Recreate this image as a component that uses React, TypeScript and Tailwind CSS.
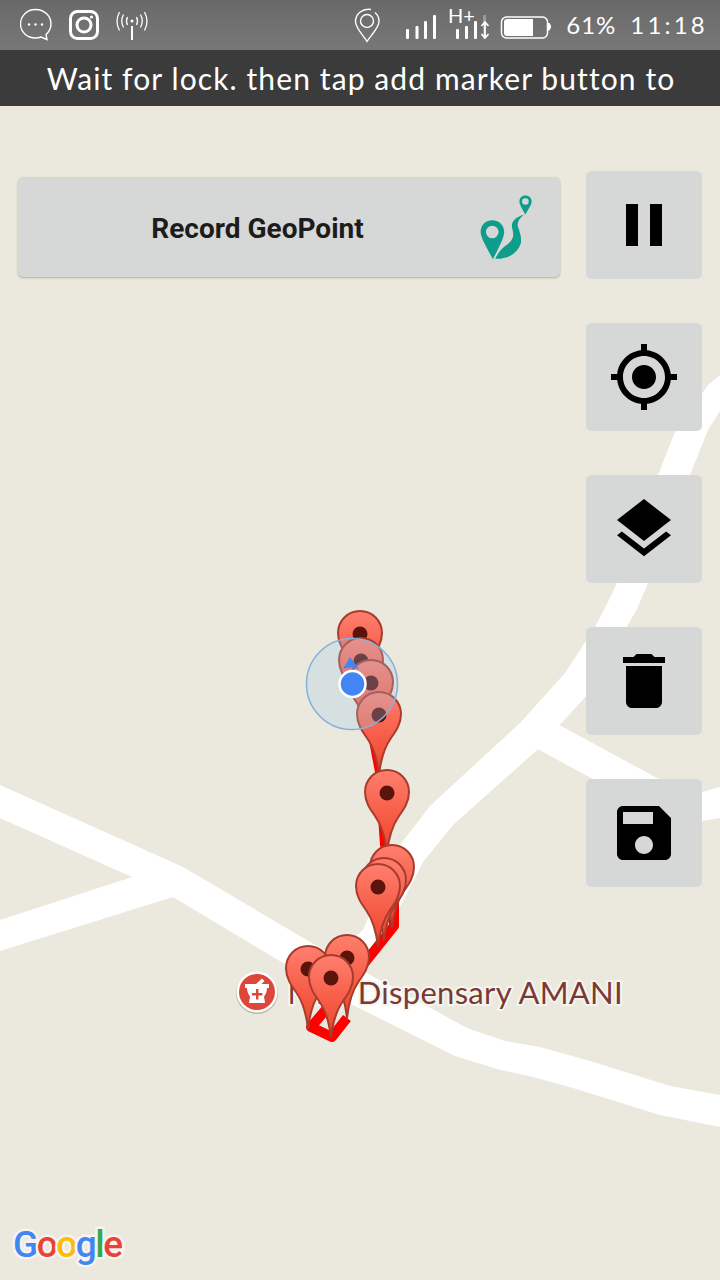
import React from "react";

const ROAD_A = "0,785 183,867 310,942 467,1028 505,1041 540,1047 590,1061 670,1086 720,1095 720,1127 660,1115 573,1088 533,1077 497,1069 455,1056 353,1005 173,897 0,951 0,920 132,877 0,818";
const ROAD_B = "720,375 708,385 675,432 658,475 617,583 607,604 595,627 565,673 520,723 430,806 400,845 363,930 335,955 355,1000 370,960 400,907 423,862 453,825 537,750 558,727 587,695 637,609 648,583 690,475 708,430 720,411";
const ROAD_C = "550,720 657,778 702,792 720,787 720,818 702,821 660,810 593,779 530,745";

const PINS: [number, number][] = [
  [360, 634], [361, 661], [371, 683], [379, 715], [387, 793],
  [392, 868], [384, 881], [378, 887], [347, 958], [308, 969], [331, 978],
];

function Pin({ x, y }: { x: number; y: number }) {
  return (
    <g transform={`translate(${x} ${y})`}>
      <path
        d="M0,-23 C-12.5,-23 -22,-13 -22,-1 C-22,9 -17,16 -12,23 C-7,30 -2,42 0,60 C2,42 7,30 12,23 C17,16 22,9 22,-1 C22,-13 12.5,-23 0,-23Z"
        fill="url(#pinFill)"
        stroke="#a83c2c"
        strokeWidth="2"
      />
      <circle r="7.5" fill="#5a140c" />
    </g>
  );
}

function MapBtn({ d }: { d: string }) {
  return (
    <button className="flex h-[108px] w-[116px] items-center justify-center rounded-[5px] bg-[#d6d8d8]">
      <svg width="72" height="72" viewBox="0 0 24 24" fill="#000">
        <path d={d} />
      </svg>
    </button>
  );
}

const ICONS = [
  "M6 19h4V5H6v14zm8-14v14h4V5h-4z",
  "M12 8c-2.21 0-4 1.79-4 4s1.79 4 4 4 4-1.79 4-4-1.79-4-4-4zm8.94 3c-.46-4.17-3.77-7.48-7.94-7.94V1h-2v2.06C6.83 3.52 3.52 6.83 3.06 11H1v2h2.06c.46 4.17 3.77 7.48 7.94 7.94V23h2v-2.06c4.17-.46 7.48-3.77 7.94-7.94H23v-2h-2.06zM12 19c-3.87 0-7-3.13-7-7s3.13-7 7-7 7 3.13 7 7-3.13 7-7 7z",
  "M11.99 18.54l-7.37-5.73L3 14.07l9 7 9-7-1.63-1.27-7.38 5.74zM12 16l7.36-5.73L21 9l-9-7-9 7 1.63 1.27L12 16z",
  "M6 19c0 1.1.9 2 2 2h8c1.1 0 2-.9 2-2V7H6v12zM19 4h-3.5l-1-1h-5l-1 1H5v2h14V4z",
  "M17 3H5c-1.11 0-2 .9-2 2v14c0 1.1.89 2 2 2h14c1.1 0 2-.9 2-2V7l-4-4zm-5 16c-1.66 0-3-1.34-3-3s1.34-3 3-3 3 1.34 3 3-1.34 3-3 3zm3-10H5V5h10v4z",
];

function Bars({ xs, dimLast }: { xs: number[]; dimLast?: boolean }) {
  const tops = [29, 26, 21, 15];
  return (
    <>
      {xs.map((x, i) => (
        <rect
          key={x}
          x={x}
          y={tops[i]}
          width="3"
          height={39 - tops[i]}
          rx="1"
          fill={dimLast && i === 3 ? "#9a9a9a" : "#fff"}
        />
      ))}
    </>
  );
}

function StatusBar() {
  return (
    <div className="flex h-[50px] items-center justify-between bg-linear-to-b from-[#696969] to-[#787878] pl-[20px] pr-[12px]">
      <div className="flex items-center">
        <svg width="32" height="50" viewBox="20 0 32 50" fill="none" stroke="#fff">
          <path d="M46 34.500 C50 31 51 27.500 51 24 C51 15.500 44 9.500 35.500 9.500 C27 9.500 20.500 16 20.500 24 C20.500 32 27 38 35.500 38 C38 38 39.500 37.600 41 37 L47 39.500 Z" strokeWidth="1.400" />
          <circle cx="29" cy="24.500" r="1.200" fill="#fff" stroke="none" />
          <circle cx="35.500" cy="24.500" r="1.200" fill="#fff" stroke="none" />
          <circle cx="42" cy="24.500" r="1.200" fill="#fff" stroke="none" />
        </svg>
        <svg className="ml-[17px]" width="30" height="50" viewBox="69 0 30 50" fill="none" stroke="#fff" strokeWidth="3">
          <rect x="70.500" y="11.500" width="27" height="27" rx="7" />
          <circle cx="84" cy="25" r="7" />
          <circle cx="91.500" cy="17" r="1.600" fill="#fff" stroke="none" />
        </svg>
        <svg className="ml-[17px]" width="33" height="50" viewBox="116 0 33 50" fill="none" stroke="#fff" strokeWidth="1.300">
          <circle cx="132" cy="21" r="1.500" fill="#fff" stroke="none" />
          <path d="M132 26V40" strokeWidth="2" />
          <path d="M127.500 17 Q125.500 21 127.500 25 M136.500 17 Q138.500 21 136.500 25" />
          <path d="M123.500 14.500 Q120 21 123.500 27.500 M140.500 14.500 Q144 21 140.500 27.500" />
          <path d="M119.500 12 Q114.500 21 119.500 30.500 M144.500 12 Q149.500 21 144.500 30.500" />
        </svg>
      </div>
      <div className="flex items-center">
        <svg width="27" height="50" viewBox="355 0 27 50" fill="none" stroke="#fff" strokeWidth="1.400">
          <path d="M372 9.500 C364 8 356.500 13.500 356.500 21.500 C356.500 28 364 35 368 41.500 C372 35 380 28 380 21.500 C380 18 378.500 14.500 376 12.500" />
          <circle cx="368" cy="21" r="6.500" />
        </svg>
        <svg className="ml-[25px]" width="30" height="50" viewBox="407 0 30 50">
          <Bars xs={[407, 416.500, 425, 434]} />
        </svg>
        <svg className="ml-[13px]" width="41" height="50" viewBox="450 0 41 50">
          <text x="449" y="23" fill="#fff" fontSize="20" fontFamily="Lato, sans-serif" fontWeight="400">H+</text>
          <Bars xs={[457, 466, 475, 484]} dimLast />
          <path d="M486 22v16M482.500 26l3.500-4 3.500 4M482.500 34l3.500 4 3.500-4" fill="none" stroke="#fff" strokeWidth="1.800" />
        </svg>
        <svg className="ml-[10px]" width="52" height="50" viewBox="501 0 52 50" fill="none">
          <rect x="502.500" y="17" width="46" height="21" rx="5" stroke="#fff" strokeWidth="1.500" />
          <path d="M505 22a3 3 0 0 1 3-3h26v17h-26a3 3 0 0 1-3-3z" fill="#fff" />
          <path d="M549 23h1.500l1.500 2.500v2l-1.500 3H549z" fill="#fff" />
        </svg>
        <span className="ml-[14px] font-['Lato',sans-serif] text-[24px] leading-none tracking-[1px] text-white">
          61%
        </span>
        <span className="ml-[14px] font-['Lato',sans-serif] text-[24px] leading-none tracking-[3.200px] text-white">
          11:18
        </span>
      </div>
    </div>
  );
}

function RecordButton() {
  return (
    <button className="flex h-[100px] w-[542px] items-center rounded-[5px] bg-[#d6d8d8] shadow-[0_1px_2px_rgba(120,110,90,0.5)]">
      <span className="flex-1 pl-[20px] pt-[3px] text-center font-['Roboto',sans-serif] text-[28px] font-bold text-[#1c1c1c]">
        Record GeoPoint
      </span>
      <svg className="mr-[25px]" width="58" height="70" viewBox="110 80 175 210" fill="#0d9d8a">
        <path fillRule="evenodd" d="M156 165 C134 165 121 182 121 200 C121 215 135 240 158 282 C180 240 192 215 192 200 C192 182 178 165 156 165Z M156 181 A19 19 0 1 0 156 219 A19 19 0 1 0 156 181Z" />
        <path fillRule="evenodd" d="M256 90 C245 90 238 98 238 108 C238 118 247 130 256 148 C265 130 275 118 275 108 C275 98 267 90 256 90Z M256 98 A10 10 0 1 0 256 118 A10 10 0 1 0 256 98Z" />
        <path d="M252 148 C225 155 212 170 216 188 C220 205 224 218 205 235 C195 243 180 250 165 281 C205 282 232 265 242 235 C246 215 238 198 233 183 C231 170 238 158 252 148Z" />
      </svg>
    </button>
  );
}

export default function App() {
  return (
    <div className="flex h-[1280px] w-[720px] flex-col overflow-hidden bg-[#ebe9dd]">
      <StatusBar />
      <div className="flex h-[56px] items-center justify-center bg-[#3b3b3b] pl-[2px] font-['Lato',sans-serif] text-[30px] tracking-[1.100px] text-white">
        Wait for lock. then tap add marker button to
      </div>

      <div className="relative flex-1">
        <svg className="absolute left-0 top-[-106px]" width="720" height="1280" viewBox="0 0 720 1280">
          <g fill="#fff">
            <polygon points={ROAD_A} />
            <polygon points={ROAD_B} />
            <polygon points={ROAD_C} />
          </g>
          <polyline points="368,720 378,772 383,845 393,880 394,910" fill="none" stroke="#ff0000" strokeWidth="6" />
          <polyline
            points="394,900 394,926 347,985 311,1027 332,1037 347,1018"
            fill="none"
            stroke="#ff0000"
            strokeWidth="10"
            strokeLinejoin="round"
          />
        </svg>

        <div className="absolute right-[97px] top-[866px] whitespace-nowrap font-['Lato',sans-serif] text-[31px] leading-[40px] tracking-[0.300px] text-[#7a3a34] [-webkit-text-stroke:4px_#f6f5f0] [paint-order:stroke_fill]">
          Mini Dispensary AMANI
        </div>

        <svg className="absolute left-0 top-[-106px]" width="720" height="1280" viewBox="0 0 720 1280">
          <defs>
            <linearGradient id="pinFill" x1="0" y1="0" x2="0" y2="1">
              <stop offset="0" stopColor="#ff7f6e" />
              <stop offset="0.700" stopColor="#f4533c" />
              <stop offset="1" stopColor="#e8432c" />
            </linearGradient>
          </defs>
          <g>
            <circle cx="257" cy="993" r="21" fill="#b9b6ac" />
            <circle cx="257" cy="992" r="20.500" fill="#fff" />
            <circle cx="257" cy="992" r="18" fill="#dc463b" />
            <path d="M245 984h11l6-5.500 2.500 2.500-3 3H269v4h-2c0 3-1 6-3 8.500l1 6.500H249l1-6.500c-2-2.500-3-5.500-3-8.500h-2z" fill="#fff" />
            <path d="M256 989h2.400v4h4v2.400h-4v4H256v-4h-4V993h4z" fill="#dc463b" />
          </g>
          {PINS.map(([x, y]) => (
            <Pin key={`${x}-${y}`} x={x} y={y} />
          ))}
          <circle cx="352" cy="684" r="45.500" fill="rgb(154,200,235)" fillOpacity="0.260" stroke="#84b1dc" strokeWidth="1.500" />
          <path d="M350 657 L359 669 Q350 666 343 669 Z" fill="#4285f4" />
          <circle cx="352.500" cy="684" r="13" fill="#4285f4" stroke="#fff" strokeWidth="2.500" />
        </svg>

        <div className="relative flex items-start justify-between pl-[18px] pr-[18px]">
          <div className="mt-[71px]">
            <RecordButton />
          </div>
          <div className="mt-[65px] flex flex-col gap-[44px]">
            {ICONS.map((d) => (
              <MapBtn key={d} d={d} />
            ))}
          </div>
        </div>

        <div className="absolute bottom-[13px] left-[13px] font-['Roboto',sans-serif] text-[37px] font-medium leading-[44px] tracking-[-1.500px] [-webkit-text-stroke:5px_#f5f4ef] [paint-order:stroke_fill]">
          <span className="text-[#4285f4]">G</span>
          <span className="text-[#ea4335]">o</span>
          <span className="text-[#fbbc05]">o</span>
          <span className="text-[#4285f4]">g</span>
          <span className="text-[#34a853]">l</span>
          <span className="text-[#ea4335]">e</span>
        </div>
      </div>
    </div>
  );
}
